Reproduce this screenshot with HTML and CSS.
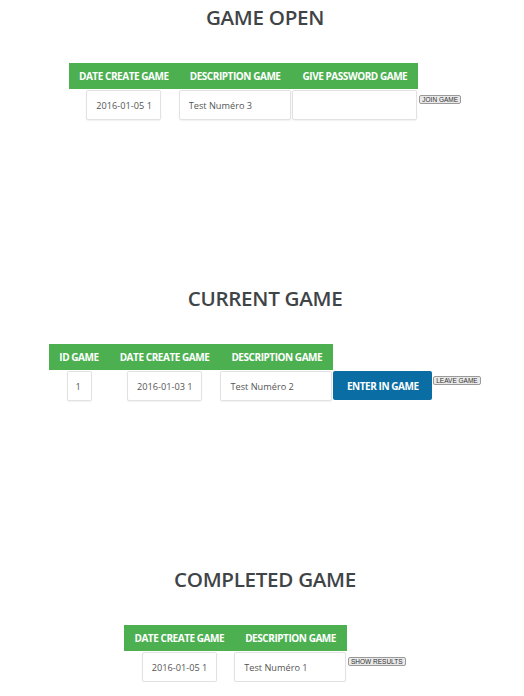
FILE: index.html
```html
<!DOCTYPE html>
<html>
<head>
<meta charset="utf-8">
<link rel="stylesheet" href="styles.css">
</head>
<body>
<main class="page">
  <section class="block">
    <h2 class="title">GAME OPEN</h2>
    <table class="games">
      <thead>
        <tr><th>DATE CREATE GAME</th><th>DESCRIPTION GAME</th><th>GIVE PASSWORD GAME</th></tr>
      </thead>
      <tbody>
        <tr>
          <td><input class="field date" type="text" value="2016-01-05 15:42:10" readonly></td>
          <td><input class="field desc" type="text" value="Test Numéro 3" readonly></td>
          <td><input class="field pass" type="text" value=""></td>
          <td class="act"><button class="mini">JOIN GAME</button></td>
        </tr>
      </tbody>
    </table>
  </section>

  <section class="block">
    <h2 class="title">CURRENT GAME</h2>
    <table class="games">
      <thead>
        <tr><th>ID GAME</th><th>DATE CREATE GAME</th><th>DESCRIPTION GAME</th></tr>
      </thead>
      <tbody>
        <tr>
          <td><input class="field id" type="text" value="1" readonly></td>
          <td><input class="field date" type="text" value="2016-01-03 13:20:05" readonly></td>
          <td><input class="field desc" type="text" value="Test Numéro 2" readonly></td>
          <td class="go"><button class="enter">ENTER IN GAME</button></td>
          <td class="act"><button class="mini">LEAVE GAME</button></td>
        </tr>
      </tbody>
    </table>
  </section>

  <section class="block last">
    <h2 class="title">COMPLETED GAME</h2>
    <table class="games">
      <thead>
        <tr><th>DATE CREATE GAME</th><th>DESCRIPTION GAME</th></tr>
      </thead>
      <tbody>
        <tr>
          <td><input class="field date" type="text" value="2016-01-05 15:42:10" readonly></td>
          <td><input class="field desc" type="text" value="Test Numéro 1" readonly></td>
          <td class="act"><button class="mini">SHOW RESULTS</button></td>
        </tr>
      </tbody>
    </table>
  </section>
</main>
</body>
</html>
```

FILE: styles.css
```css
html, body {
  margin: 0;
  padding: 0;
  background: #ffffff;
}
body {
  font-family: "Open Sans", "Liberation Sans", sans-serif;
  color: #444;
}
.page {
  padding: 0 0 0 6px;
}
.block {
  height: 281px;
  display: flex;
  flex-direction: column;
  align-items: center;
}
.block.last {
  height: auto;
}
.title {
  margin: 4px 0 0;
  font-size: 20.6px;
  line-height: 26px;
  font-weight: 600;
  color: #3f4447;
  letter-spacing: -0.3px;
}
.games {
  margin-top: 33px;
  border-collapse: collapse;
  border-spacing: 0;
}
.games th {
  background: #4caf50;
  color: #fff;
  font-size: 10px;
  font-weight: 700;
  height: 26px;
  padding: 0 11px;
  white-space: nowrap;
  letter-spacing: -0.45px;
}
.games th:first-child {
  padding: 0 10px;
}
.games td {
  padding: 1px 0 0;
  text-align: center;
  vertical-align: top;
}
.field {
  box-sizing: border-box;
  height: 30px;
  border: 1px solid #e2e2e2;
  border-radius: 2px;
  box-shadow: 0 1px 2px rgba(0,0,0,0.06);
  font-family: "Open Sans", "Liberation Sans", sans-serif;
  font-size: 9.2px;
  color: #555;
  padding: 0 9px;
  background: #fff;
  outline: none;
  display: block;
  margin: 0 auto;
}
.field.date { width: 75px; }
.field.id { width: 25px; padding: 0 8px; }
.field.desc { width: 112px; margin: 0; }
.field.pass { width: 125px; margin: 0; }
.act {
  padding-left: 1px !important;
}
.mini {
  display: block;
  margin-top: 5px;
  font-family: "Liberation Sans", Arial, sans-serif;
  font-size: 6.5px;
  line-height: 7px;
  padding: 0 2px;
  color: #333;
  background: #e9e9e9;
  border: 1px solid #9a9a9a;
  border-radius: 2px;
  white-space: nowrap;
}
.go {
  padding-top: 0 !important;
}
.enter {
  display: block;
  width: 99px;
  height: 29px;
  border: 0;
  border-radius: 2px;
  background: #0a6ea4;
  color: #fff;
  font-family: "Open Sans", "Liberation Sans", sans-serif;
  font-size: 10px;
  font-weight: 700;
  letter-spacing: -0.45px;
  margin-top: 1px;
}
```
